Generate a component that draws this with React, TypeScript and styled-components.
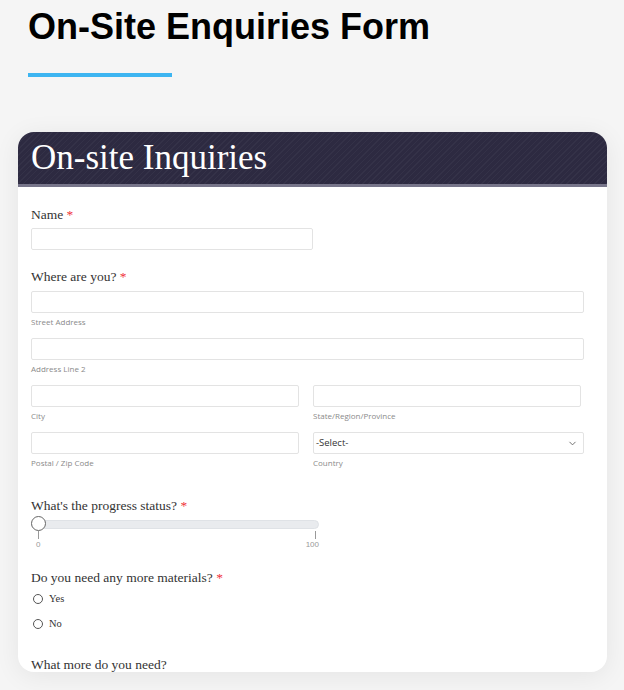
import * as React from 'react';
import styled, { createGlobalStyle } from 'styled-components';
import { ChevronDown } from 'lucide-react';

const GlobalStyle = createGlobalStyle`
  html, body {
    margin: 0;
    padding: 0;
    background: #f5f5f5;
  }
  * {
    box-sizing: border-box;
  }
`;

const serif = '"Liberation Serif", "Times New Roman", serif';
const sans = '"Open Sans", "Liberation Sans", sans-serif';

const App = () => {
  return (
    <>
      <GlobalStyle />
      <Page>
        <Title>On-Site Enquiries Form</Title>
        <Accent />
        <Card>
          <CardHeader>On-site Inquiries</CardHeader>
          <CardBody>
            <Field>
              <Label>
                Name <Req>*</Req>
              </Label>
              <Input $width={282} />
            </Field>

            <Field>
              <Label>
                Where are you? <Req>*</Req>
              </Label>
              <AddressBlock>
                <AddressCell $span>
                  <Input />
                  <SubLabel>Street Address</SubLabel>
                </AddressCell>
                <AddressCell $span>
                  <Input />
                  <SubLabel>Address Line 2</SubLabel>
                </AddressCell>
                <AddressCell>
                  <Input />
                  <SubLabel>City</SubLabel>
                </AddressCell>
                <AddressCell>
                  <Input $width={268} />
                  <SubLabel>State/Region/Province</SubLabel>
                </AddressCell>
                <AddressCell>
                  <Input />
                  <SubLabel>Postal / Zip Code</SubLabel>
                </AddressCell>
                <AddressCell>
                  <SelectBox>
                    <SelectText>-Select-</SelectText>
                    <ChevronDown size={11} strokeWidth={2} color="#666" />
                  </SelectBox>
                  <SubLabel>Country</SubLabel>
                </AddressCell>
              </AddressBlock>
            </Field>

            <Field>
              <Label>
                What's the progress status? <Req>*</Req>
              </Label>
              <Slider>
                <Track />
                <Thumb />
              </Slider>
              <Scale>
                <Tick>
                  <TickMark />
                  <TickText>0</TickText>
                </Tick>
                <Tick $end>
                  <TickMark $end />
                  <TickText>100</TickText>
                </Tick>
              </Scale>
            </Field>

            <Field>
              <Label>
                Do you need any more materials? <Req>*</Req>
              </Label>
              <RadioList>
                <RadioRow>
                  <Radio />
                  <RadioText>Yes</RadioText>
                </RadioRow>
                <RadioRow>
                  <Radio />
                  <RadioText>No</RadioText>
                </RadioRow>
              </RadioList>
            </Field>

            <Field>
              <Label>What more do you need?</Label>
            </Field>
          </CardBody>
        </Card>
      </Page>
    </>
  );
};

const Page = styled.div`
  padding: 5px 0 0 18px;
  min-height: 690px;
`;

const Title = styled.h1`
  margin: 0 0 0 10px;
  font: 700 36px/44px "Liberation Sans", Arial, sans-serif;
  color: #000;
`;

const Accent = styled.div`
  width: 144px;
  height: 4px;
  margin: 24px 0 0 10px;
  background: #3db5f1;
`;

const Card = styled.section`
  width: 589px;
  height: 540px;
  margin-top: 55px;
  border-radius: 16px;
  overflow: hidden;
  background: #fff;
  box-shadow: 0 4px 26px rgba(0, 0, 0, 0.07);
`;

const CardHeader = styled.header`
  height: 55px;
  padding-left: 13px;
  font: 400 35px/52px ${serif};
  color: #fff;
  background-color: #2d2a41;
  background-image: repeating-linear-gradient(
    135deg,
    rgba(255, 255, 255, 0.035) 0 1px,
    transparent 1px 4px
  );
  border-bottom: 3px solid #77758a;
`;

const CardBody = styled.div`
  display: flex;
  flex-direction: column;
  gap: 18px;
  padding: 19px 23px 0 13px;
`;

const Field = styled.div`
  display: flex;
  flex-direction: column;
  align-items: flex-start;
`;

const Label = styled.label`
  font: 400 13.5px/17px ${serif};
  color: #333;
  margin-bottom: 5px;
`;

const Req = styled.span`
  color: #f0313a;
`;

const Input = styled.input<{ $width?: number }>`
  display: block;
  width: ${(p) => (p.$width ? `${p.$width}px` : '100%')};
  height: 22px;
  border: 1px solid #e3e3e3;
  border-radius: 2px;
  background: #fff;
  outline: none;
`;

const AddressBlock = styled.div`
  display: grid;
  grid-template-columns: 268px 271px;
  column-gap: 14px;
  row-gap: 10px;
  width: 100%;
  padding: 1px 0 10px;
`;

const AddressCell = styled.div<{ $span?: boolean }>`
  grid-column: ${(p) => (p.$span ? '1 / -1' : 'auto')};
  display: flex;
  flex-direction: column;
`;

const SubLabel = styled.span`
  margin-top: 3px;
  font: 400 8px/12px ${sans};
  color: #8a8a8a;
`;

const SelectBox = styled.div`
  display: flex;
  align-items: center;
  justify-content: space-between;
  height: 22px;
  padding: 0 5px 0 2px;
  border: 1px solid #e3e3e3;
  border-radius: 2px;
  background: #fff;
`;

const SelectText = styled.span`
  font: 400 9.5px/1 ${sans};
  color: #333;
`;

const Slider = styled.div`
  position: relative;
  width: 288px;
  height: 16px;
  margin-top: -3px;
  display: flex;
  align-items: center;
`;

const Track = styled.div`
  width: 100%;
  height: 9px;
  border-radius: 5px;
  background: #e9ebee;
  border: 1px solid #dfe2e6;
`;

const Thumb = styled.div`
  position: absolute;
  left: 0;
  top: 0;
  width: 15px;
  height: 15px;
  border-radius: 50%;
  background: #fff;
  border: 1.5px solid #666;
`;

const Scale = styled.div`
  display: flex;
  justify-content: space-between;
  width: 288px;
  margin-top: -1px;
  padding-left: 5px;
`;

const Tick = styled.div<{ $end?: boolean }>`
  display: flex;
  flex-direction: column;
  align-items: ${(p) => (p.$end ? 'flex-end' : 'center')};
`;

const TickMark = styled.div<{ $end?: boolean }>`
  width: 1px;
  height: 8px;
  background: #999;
  margin-right: ${(p) => (p.$end ? '3px' : '0')};
`;

const TickText = styled.span`
  font: 400 8px/12px "Liberation Sans", Arial, sans-serif;
  color: #999;
`;

const RadioList = styled.div`
  display: flex;
  flex-direction: column;
  gap: 9px;
  padding: 0 0 6px 2px;
`;

const RadioRow = styled.div`
  display: flex;
  align-items: center;
  height: 16px;
  gap: 6px;
`;

const Radio = styled.span`
  width: 10px;
  height: 10px;
  border-radius: 50%;
  border: 1px solid #555;
  background: #fff;
`;

const RadioText = styled.span`
  font: 400 10.5px/16px ${serif};
  color: #333;
`;

export default App;
